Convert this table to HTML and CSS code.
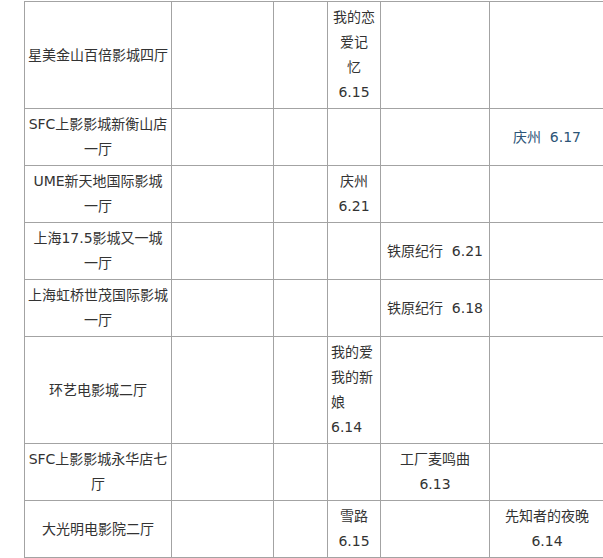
FILE: index.html
```html
<!DOCTYPE html>
<html lang="zh-CN">
<head>
<meta charset="utf-8">
<title>排片表</title>
<link rel="stylesheet" href="styles.css">
</head>
<body>
<div class="page">
<table class="schedule">
<colgroup>
<col class="c-hall"><col class="c-a"><col class="c-b"><col class="c-c"><col class="c-d"><col class="c-e">
</colgroup>
<tbody>
<tr>
<td class="hall">星美金山百倍影城四厅</td><td></td><td></td>
<td class="film">我的恋<br>爱记<br>忆<br>6.15</td><td></td><td></td>
</tr>
<tr>
<td class="hall">SFC上影影城新衡山店<br>一厅</td><td></td><td></td><td></td><td></td>
<td class="film"><a class="film-link" href="#">庆州&nbsp; 6.17</a></td>
</tr>
<tr>
<td class="hall">UME新天地国际影城<br>一厅</td><td></td><td></td>
<td class="film">庆州<br>6.21</td><td></td><td></td>
</tr>
<tr>
<td class="hall">上海17.5影城又一城<br>一厅</td><td></td><td></td><td></td>
<td class="film">铁原纪行&nbsp; 6.21</td><td></td>
</tr>
<tr>
<td class="hall">上海虹桥世茂国际影城<br>一厅</td><td></td><td></td><td></td>
<td class="film">铁原纪行&nbsp; 6.18</td><td></td>
</tr>
<tr>
<td class="hall">环艺电影城二厅</td><td></td><td></td>
<td class="film left">我的爱<br>我的新<br>娘<br>6.14</td><td></td><td></td>
</tr>
<tr>
<td class="hall">SFC上影影城永华店七<br>厅</td><td></td><td></td><td></td>
<td class="film">工厂麦鸣曲<br>6.13</td><td></td>
</tr>
<tr>
<td class="hall">大光明电影院二厅</td><td></td><td></td>
<td class="film">雪路<br>6.15</td><td></td>
<td class="film">先知者的夜晚<br>6.14</td>
</tr>
</tbody>
</table>
</div>
</body>
</html>
```

FILE: styles.css
```css
html, body {
  margin: 0;
  padding: 0;
  background: #ffffff;
  overflow: hidden;
}

.page {
  padding: 1px 0 0 24px;
}

.schedule {
  border-collapse: separate;
  border-spacing: 0;
  table-layout: fixed;
  width: 581px;
  border-top: 1px solid #a3a3a3;
  border-left: 1px solid #a3a3a3;
  font-family: "DejaVu Sans", "Noto Sans CJK SC", sans-serif;
  font-size: 14px;
  line-height: 25px;
  color: #333333;
}

.c-hall { width: 147px; }
.c-a { width: 102px; }
.c-b { width: 54px; }
.c-c { width: 53px; }
.c-d { width: 109px; }
.c-e { width: 115px; }

.schedule td {
  box-sizing: border-box;
  border-right: 1px solid #a3a3a3;
  border-bottom: 1px solid #a3a3a3;
  padding: 3px;
  text-align: center;
  vertical-align: middle;
  height: 57px;
}

.schedule td.left {
  text-align: left;
}

.film-link {
  color: #2c5477;
  text-decoration: none;
}
```
